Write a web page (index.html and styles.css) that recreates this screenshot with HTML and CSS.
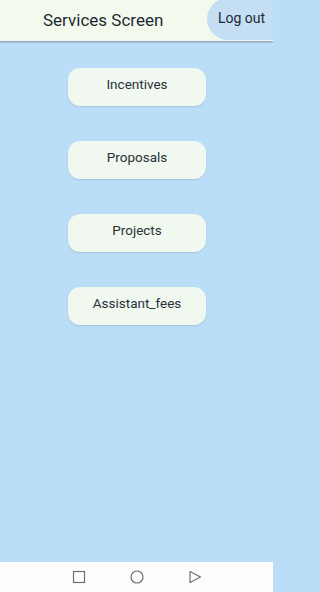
FILE: index.html
```html
<!DOCTYPE html>
<html>
<head>
<meta charset="utf-8">
<link rel="stylesheet" href="styles.css">
</head>
<body>
<div class="app">
  <header class="appbar">
    <h1 class="title">Services Screen</h1>
    <button class="logout">Log out</button>
  </header>
  <main class="content">
    <button class="service">Incentives</button>
    <button class="service">Proposals</button>
    <button class="service">Projects</button>
    <button class="service">Assistant_fees</button>
  </main>
  <nav class="sysnav">
    <svg width="14" height="14" viewBox="0 0 14 14"><rect x="1.5" y="1.5" width="11" height="11" fill="none" stroke="#6f6f6f" stroke-width="1.2"/></svg>
    <svg width="14" height="14" viewBox="0 0 14 14"><circle cx="7" cy="7" r="6" fill="none" stroke="#6f6f6f" stroke-width="1.2"/></svg>
    <svg width="14" height="14" viewBox="0 0 14 14"><path d="M2 1.5 L12.5 7 L2 12.5 Z" fill="none" stroke="#6f6f6f" stroke-width="1.2" stroke-linejoin="round"/></svg>
  </nav>
</div>
</body>
</html>
```
FILE: styles.css
```css
* { box-sizing: border-box; }
html, body { margin: 0; padding: 0; }
body {
  font-family: Roboto, "Noto Sans", sans-serif;
  background: #bbdef8;
}
.app {
  width: 273px;
  height: 592px;
  display: flex;
  flex-direction: column;
  overflow: hidden;
}
.appbar {
  height: 41px;
  flex: none;
  background: #f4f9ee;
  display: flex;
  align-items: center;
  position: relative;
  box-shadow: 0 1px 2px rgba(0,0,0,0.35);
  z-index: 1;
}
.title {
  margin: 0 0 0 43px;
  font-size: 17px;
  font-weight: 400;
  color: #1d2a33;
  line-height: 1;
  position: relative;
  top: 0;
}
.logout {
  position: absolute;
  left: 207px;
  top: -2px;
  width: 86px;
  height: 42px;
  border: none;
  border-radius: 21px;
  background: #c4def4;
  color: #1d2a33;
  font-family: inherit;
  font-size: 14px;
  text-align: left;
  padding: 0 0 3px 11px;
}
.content {
  flex: 1;
  display: flex;
  flex-direction: column;
  align-items: center;
  padding-top: 27px;
  gap: 35px;
}
.service {
  width: 138px;
  height: 38px;
  border: none;
  border-radius: 12px;
  background: #f1f8ef;
  color: #27323a;
  font-family: inherit;
  font-size: 13.5px;
  padding: 0 0 6px 1px;
  box-shadow: 0 1px 2px rgba(0,0,0,0.12);
}
.sysnav {
  height: 30px;
  flex: none;
  background: #fdfdfd;
  display: flex;
  align-items: center;
  justify-content: center;
  gap: 44px;
}
```
